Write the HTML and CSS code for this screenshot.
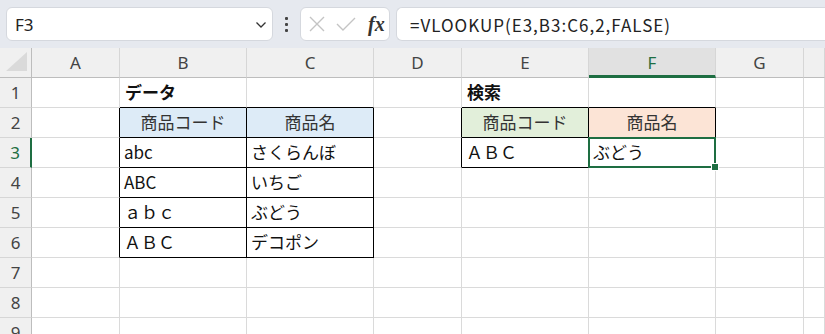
FILE: index.html
```html
<!DOCTYPE html>
<html lang="ja">
<head>
    <meta charset="UTF-8">
    <title>VLOOKUP</title>
    <link rel="stylesheet" href="styles.css">
</head>
<body>
    <div class="toolbar">
        <div class="namebox">
            <span>F3</span>
            <svg class="chev" width="12" height="8" viewBox="0 0 12 8"><path d="M1.5 1.5 L6 6 L10.5 1.5" fill="none" stroke="#333" stroke-width="1.3"/></svg>
        </div>
        <div class="dots"><i></i><i></i><i></i></div>
        <div class="fxbox">
            <svg width="18" height="18" viewBox="0 0 18 18"><path d="M2 2 L16 16 M16 2 L2 16" stroke="#c4c4c4" stroke-width="1.4"/></svg>
            <svg width="20" height="18" viewBox="0 0 20 18"><path d="M1 9 L7 15 L19 3" fill="none" stroke="#c4c4c4" stroke-width="1.4"/></svg>
            <span class="fx">fx</span>
        </div>
        <div class="formula">=VLOOKUP(E3,B3:C6,2,FALSE)</div>
    </div>

    <div class="sheet">
        <!-- column headers -->
        <div class="c corner"><svg width="24" height="22" viewBox="0 0 24 22"><path d="M22 1 L22 20 L1 20 Z" fill="#dadada"/></svg></div>
        <div class="c col">A</div>
        <div class="c col">B</div>
        <div class="c col">C</div>
        <div class="c col">D</div>
        <div class="c col">E</div>
        <div class="c col sel">F</div>
        <div class="c col">G</div>
        <div class="c col"></div>

        <!-- row 1 -->
        <div class="c row">1</div>
        <div class="c"></div>
        <div class="c bb title">データ</div>
        <div class="c bb"></div>
        <div class="c"></div>
        <div class="c bb title">検索</div>
        <div class="c bb"></div>
        <div class="c"></div>
        <div class="c"></div>

        <!-- row 2 -->
        <div class="c row">2</div>
        <div class="c br"></div>
        <div class="c br bb head blue">商品コード</div>
        <div class="c br bb head blue">商品名</div>
        <div class="c br"></div>
        <div class="c br bb head green">商品コード</div>
        <div class="c br bb head peach">商品名</div>
        <div class="c"></div>
        <div class="c"></div>

        <!-- row 3 -->
        <div class="c row active">3</div>
        <div class="c br"></div>
        <div class="c br bb">abc</div>
        <div class="c br bb">さくらんぼ</div>
        <div class="c br"></div>
        <div class="c br bb">ＡＢＣ</div>
        <div class="c br bb current">ぶどう<span class="handle"></span></div>
        <div class="c"></div>
        <div class="c"></div>

        <!-- row 4 -->
        <div class="c row">4</div>
        <div class="c br"></div>
        <div class="c br bb">ABC</div>
        <div class="c br bb">いちご</div>
        <div class="c"></div>
        <div class="c"></div>
        <div class="c"></div>
        <div class="c"></div>
        <div class="c"></div>

        <!-- row 5 -->
        <div class="c row">5</div>
        <div class="c br"></div>
        <div class="c br bb">ａｂｃ</div>
        <div class="c br bb">ぶどう</div>
        <div class="c"></div>
        <div class="c"></div>
        <div class="c"></div>
        <div class="c"></div>
        <div class="c"></div>

        <!-- row 6 -->
        <div class="c row">6</div>
        <div class="c br"></div>
        <div class="c br bb">ＡＢＣ</div>
        <div class="c br bb">デコポン</div>
        <div class="c"></div>
        <div class="c"></div>
        <div class="c"></div>
        <div class="c"></div>
        <div class="c"></div>

        <!-- row 7 -->
        <div class="c row">7</div>
        <div class="c"></div><div class="c"></div><div class="c"></div><div class="c"></div>
        <div class="c"></div><div class="c"></div><div class="c"></div><div class="c"></div>

        <!-- row 8 -->
        <div class="c row">8</div>
        <div class="c"></div><div class="c"></div><div class="c"></div><div class="c"></div>
        <div class="c"></div><div class="c"></div><div class="c"></div><div class="c"></div>

        <!-- row 9 -->
        <div class="c row">9</div>
        <div class="c"></div><div class="c"></div><div class="c"></div><div class="c"></div>
        <div class="c"></div><div class="c"></div><div class="c"></div><div class="c"></div>
    </div>
</body>
</html>
```

FILE: styles.css
```css
body {
    margin: 0;
    width: 825px;
    height: 334px;
    overflow: hidden;
    background: #fff;
    font-family: "Noto Sans", "Noto Sans CJK JP", sans-serif;
    color: #222;
}

.toolbar {
    height: 48px;
    background: #e6e9ef;
    display: flex;
    align-items: center;
    padding-left: 6px;
    box-sizing: border-box;
}

.namebox {
    width: 267px;
    height: 34px;
    box-sizing: border-box;
    background: #fff;
    border: 1px solid #d5d8de;
    border-radius: 6px;
    display: flex;
    align-items: center;
    justify-content: space-between;
    padding: 0 5px 0 8px;
    font-size: 17px;
    color: #222;
}

.chev {
    margin-top: 2px;
}

.dots {
    width: 27px;
    display: flex;
    flex-direction: column;
    align-items: center;
    gap: 3px;
}

.dots i {
    width: 3px;
    height: 3px;
    background: #444;
    border-radius: 1px;
}

.fxbox {
    width: 90px;
    height: 34px;
    box-sizing: border-box;
    background: #fff;
    border: 1px solid #d5d8de;
    border-radius: 6px;
    display: flex;
    align-items: center;
    padding-left: 7px;
    gap: 10px;
}

.fx {
    font-family: "Liberation Serif", serif;
    font-style: italic;
    font-weight: bold;
    font-size: 20px;
    color: #333;
    margin-left: 2px;
}

.formula {
    margin-left: 6px;
    flex: 1;
    height: 34px;
    box-sizing: border-box;
    background: #fff;
    border: 1px solid #d5d8de;
    border-right: none;
    border-radius: 6px 0 0 6px;
    display: flex;
    align-items: center;
    padding-left: 13px;
    font-family: "Noto Sans CJK JP", sans-serif;
    font-size: 17px;
    letter-spacing: 1px;
    color: #222;
}

.sheet {
    display: grid;
    grid-template-columns: 32px 88px 127px 127px 88px 127px 127px 88px 1fr;
    grid-auto-rows: 30px;
}

.c {
    position: relative;
    box-sizing: border-box;
    border-right: 1px solid #dadada;
    border-bottom: 1px solid #dadada;
    display: flex;
    align-items: center;
    padding: 0 4px 2px;
    font-family: "Noto Sans CJK JP", sans-serif;
    font-size: 17px;
    color: #111;
    white-space: nowrap;
}

.col, .row, .corner {
    background: #f0f0f0;
    font-family: "Noto Sans", sans-serif;
    color: #444;
    font-size: 17px;
    justify-content: center;
    padding: 0;
}

.col {
    border-bottom-color: #bdbdbd;
    border-right-color: #d6d6d6;
}

.row {
    border-right-color: #bdbdbd;
    border-bottom-color: #d6d6d6;
}

.corner {
    border-right-color: #bdbdbd;
    border-bottom-color: #bdbdbd;
    align-items: flex-end;
    justify-content: flex-start;
    padding: 0 0 4px 5px;
}

.col.sel {
    background: #e1e1e1;
    color: #1e6e42;
    border-bottom: 3px solid #1e6e42;
    padding-top: 2px;
}

.row.active {
    color: #1e6e42;
    border-right: 2px solid #1e6e42;
}

.br {
    border-right-color: #000;
}

.bb {
    border-bottom-color: #000;
}

.title {
    font-weight: bold;
    padding-left: 5px;
}

.head {
    justify-content: center;
    color: #333;
}

.blue {
    background: #ddebf7;
}

.green {
    background: #e2efda;
}

.peach {
    background: #fce4d6;
}

.current::after {
    content: "";
    position: absolute;
    left: -1px;
    top: -1px;
    right: -1px;
    bottom: -1px;
    border: 2px solid #1e6e42;
}

.handle {
    position: absolute;
    right: -4px;
    bottom: -4px;
    width: 6px;
    height: 6px;
    background: #1e6e42;
    border: 1px solid #fff;
    z-index: 2;
}
```
